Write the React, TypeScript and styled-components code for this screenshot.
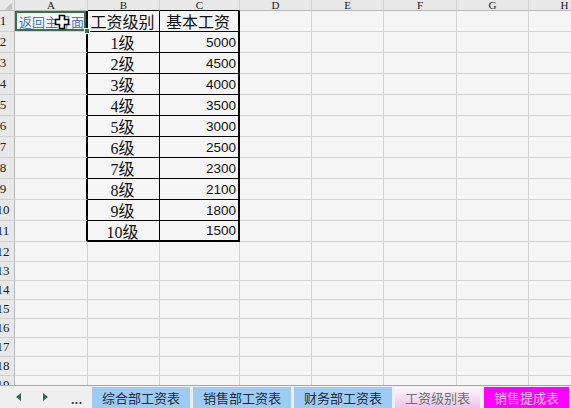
import React from "react";
import styled, { createGlobalStyle, css } from "styled-components";

const GlobalStyle = createGlobalStyle`
  html, body {
    margin: 0;
    padding: 0;
    background: #f5f5f5;
  }
  body {
    font-family: "Noto Sans CJK SC", sans-serif;
  }
`;

type Line = "grid" | "thin" | "thick";

const COLS = ["A", "B", "C", "D", "E", "F", "G", "H"];
const COL_WIDTHS = [73, 72, 80, 72, 72, 73, 72, 72];
const ROW_HEIGHTS = [
  ...Array(11).fill(21),
  20,
  ...Array(7).fill(19),
];

const levels = [
  { name: "1级", pay: 5000 },
  { name: "2级", pay: 4500 },
  { name: "3级", pay: 4000 },
  { name: "4级", pay: 3500 },
  { name: "5级", pay: 3000 },
  { name: "6级", pay: 2500 },
  { name: "7级", pay: 2300 },
  { name: "8级", pay: 2100 },
  { name: "9级", pay: 1800 },
  { name: "10级", pay: 1500 },
];

const sheets = [
  { name: "综合部工资表", variant: "blue" },
  { name: "销售部工资表", variant: "blue" },
  { name: "财务部工资表", variant: "blue" },
  { name: "工资级别表", variant: "active" },
  { name: "销售提成表", variant: "magenta" },
] as const;

const line = (l: Line) =>
  l === "thick" ? "2px solid #000" : l === "thin" ? "1px solid #000" : "1px solid #d4d4d4";

const App = () => {
  const cellText = (r: number, c: number) => {
    if (r === 1 && c === 1) return "工资级别";
    if (r === 1 && c === 2) return "基本工资";
    if (r >= 2 && r <= 11 && c === 1) return levels[r - 2].name;
    if (r >= 2 && r <= 11 && c === 2) return String(levels[r - 2].pay);
    return "";
  };

  const inTable = (r: number) => r >= 1 && r <= 11;

  // 表格外框粗线，内线细线
  const rightLine = (r: number, c: number): Line => {
    if (!inTable(r)) return "grid";
    if (c === 0 || c === 2) return "thick";
    if (c === 1) return "thin";
    return "grid";
  };

  const bottomLine = (r: number, c: number): Line => {
    if (c !== 1 && c !== 2) return "grid";
    if (r === 11) return "thick";
    if (inTable(r)) return "thin";
    return "grid";
  };

  return (
    <>
      <GlobalStyle />
      <Window>
        <SheetArea>
          <Grid>
            <Corner>
              <svg width="15" height="11" viewBox="0 0 15 11">
                <polygon points="13,2 13,10 5,10" fill="#c4c4c4" />
              </svg>
            </Corner>
            {COLS.map((col, c) => (
              <ColHeader key={col} $dark={c === 1 || c === 2}>
                {col}
              </ColHeader>
            ))}
            {ROW_HEIGHTS.map((_, i) => {
              const r = i + 1;
              return (
                <React.Fragment key={r}>
                  <RowHeader>{r}</RowHeader>
                  {COLS.map((col, c) => {
                    if (r === 1 && c === 0) {
                      return (
                        <ActiveCell key={col} $right={rightLine(r, c)}>
                          <LinkText>返回主界面</LinkText>
                          <Cursor width="16" height="16" viewBox="0 0 16 16">
                            <path
                              d="M5.5 1.5h5v4h4v5h-4v4h-5v-4h-4v-5h4z"
                              fill="#fff"
                              stroke="#000"
                              strokeWidth="1.6"
                            />
                          </Cursor>
                          <FillHandle />
                        </ActiveCell>
                      );
                    }
                    return (
                      <Cell
                        key={col}
                        $right={rightLine(r, c)}
                        $bottom={bottomLine(r, c)}
                        $align={c === 2 && r > 1 ? "end" : "center"}
                        $num={c === 2 && r > 1}
                      >
                        {cellText(r, c)}
                      </Cell>
                    );
                  })}
                </React.Fragment>
              );
            })}
          </Grid>
        </SheetArea>
        <TabBar>
          <Nav>
            <svg width="6" height="8" viewBox="0 0 6 8">
              <polygon points="5,0 5,8 0,4" fill="#2e6a4b" />
            </svg>
            <svg width="6" height="8" viewBox="0 0 6 8">
              <polygon points="0,0 0,8 5,4" fill="#2e6a4b" />
            </svg>
            <Dots>...</Dots>
          </Nav>
          <Tabs>
            {sheets.map((s) => (
              <Tab key={s.name} $variant={s.variant}>
                {s.name}
              </Tab>
            ))}
          </Tabs>
        </TabBar>
      </Window>
    </>
  );
};

const Window = styled.div`
  width: 571px;
  height: 408px;
  display: flex;
  flex-direction: column;
  overflow: hidden;
  background: #f5f5f5;
`;

const SheetArea = styled.div`
  flex: 1;
  overflow: hidden;
`;

const Grid = styled.div`
  display: grid;
  grid-template-columns: 15px ${COL_WIDTHS.map((w) => `${w}px`).join(" ")};
  grid-template-rows: 11px ${ROW_HEIGHTS.map((h) => `${h}px`).join(" ")};
  width: max-content;
`;

const headerBase = css`
  background: #e8e8e8;
  box-sizing: border-box;
  color: #222;
  font-family: "Liberation Serif", "Noto Sans CJK SC", serif;
  display: flex;
  align-items: center;
  justify-content: center;
  overflow: hidden;
`;

const Corner = styled.div`
  ${headerBase};
  border-right: 1px solid #c4c4c4;
  border-bottom: 1px solid #b8b8b8;
  align-items: flex-start;
  justify-content: flex-start;
`;

const ColHeader = styled.div<{ $dark: boolean }>`
  ${headerBase};
  font-size: 11px;
  line-height: 10px;
  border-right: 1px solid #d0d0d0;
  border-bottom: 1px solid ${({ $dark }) => ($dark ? "#000" : "#b8b8b8")};
`;

const RowHeader = styled.div`
  ${headerBase};
  font-size: 13px;
  padding-right: 8px;
  border-right: 1px solid #b8b8b8;
  border-bottom: 1px solid #d0d0d0;
`;

const Cell = styled.div<{ $right: Line; $bottom: Line; $align: "center" | "end"; $num: boolean }>`
  box-sizing: border-box;
  display: flex;
  align-items: center;
  justify-content: ${({ $align }) => ($align === "end" ? "flex-end" : "center")};
  padding: 0 2px 0 0;
  border-right: ${({ $right }) => line($right)};
  border-bottom: ${({ $bottom }) => line($bottom)};
  color: #111;
  font-size: ${({ $num }) => ($num ? "13.5px" : "16px")};
  font-family: ${({ $num }) =>
    $num
      ? `"Liberation Sans", sans-serif`
      : `"Liberation Serif", "Noto Sans CJK SC", serif`};
  white-space: nowrap;
`;

const ActiveCell = styled.div<{ $right: Line }>`
  position: relative;
  box-sizing: border-box;
  display: flex;
  align-items: center;
  justify-content: center;
  border-right: ${({ $right }) => line($right)};
  border-bottom: 1px solid #d4d4d4;
  box-shadow: inset 0 0 0 2px #3b6e50;
`;

const LinkText = styled.span`
  color: #4a78c2;
  font-size: 13px;
  font-family: "Noto Sans CJK SC", sans-serif;
  white-space: nowrap;
  margin-left: 2px;
`;

const Cursor = styled.svg`
  position: absolute;
  left: 39px;
  top: 3px;
`;

const FillHandle = styled.div`
  position: absolute;
  right: -4px;
  bottom: -3px;
  width: 4px;
  height: 4px;
  background: #3b6e50;
  border: 1px solid #fff;
  z-index: 2;
`;

const TabBar = styled.div`
  height: 23px;
  flex: none;
  box-sizing: border-box;
  border-top: 1px solid #a8a8a8;
  background: #efefef;
  display: flex;
  align-items: flex-end;
`;

const Nav = styled.div`
  width: 92px;
  height: 100%;
  flex: none;
  display: flex;
  align-items: center;
  padding-left: 16px;
  box-sizing: border-box;
  gap: 21px;
`;

const Dots = styled.span`
  font-family: "Liberation Sans", sans-serif;
  font-weight: bold;
  font-size: 12px;
  color: #333;
  margin-left: 1px;
  margin-top: 6px;
  letter-spacing: 0.5px;
`;

const Tabs = styled.div`
  display: flex;
  gap: 3px;
  height: 21px;
`;

const tabColors = {
  blue: css`
    background: #9ecaf6;
    color: #1d2b3a;
  `,
  active: css`
    background: linear-gradient(#fdf8fc, #f2c0ec);
    color: #5b7c6c;
  `,
  magenta: css`
    background: #ff00ff;
    color: #ffc8ff;
    border-left: 1px solid #f6e0f6;
  `,
};

const Tab = styled.div<{ $variant: keyof typeof tabColors }>`
  flex: none;
  padding: 0 10px;
  box-sizing: border-box;
  height: 21px;
  display: flex;
  align-items: center;
  font-size: 13px;
  font-family: "Noto Sans CJK SC", sans-serif;
  white-space: nowrap;
  ${({ $variant }) => tabColors[$variant]};
`;

export default App;
